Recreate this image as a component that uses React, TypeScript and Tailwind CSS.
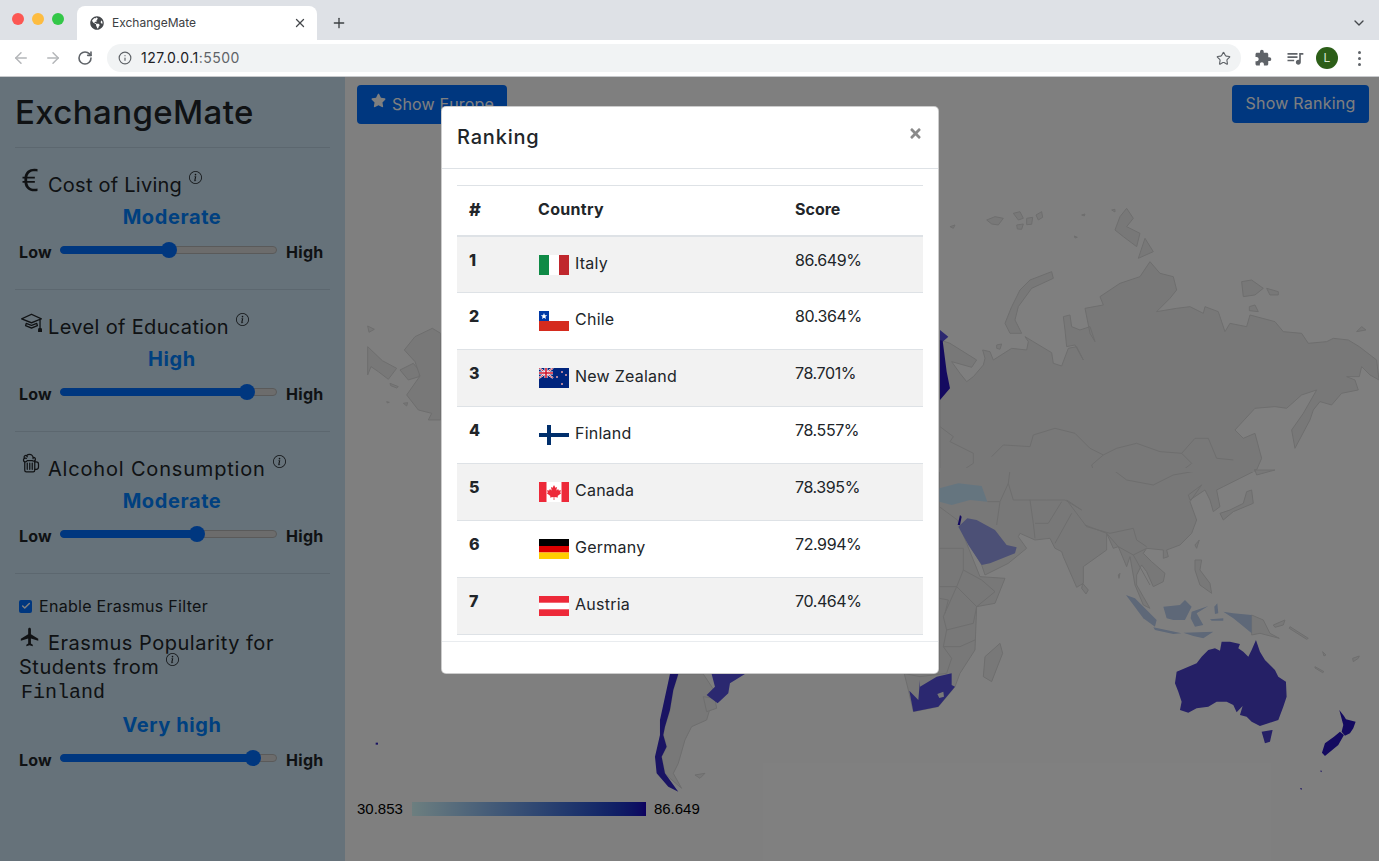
import React from 'react';
import { ArrowLeft, ArrowRight, RotateCw, Info, Star, X, Plus, ChevronDown, Check } from 'lucide-react';
import { FaGlobeAmericas, FaStar, FaTimes } from 'react-icons/fa';
import { MdExtension, MdQueueMusic, MdFlight } from 'react-icons/md';
import { BsCurrencyEuro, BsMortarboard, BsInfoCircle } from 'react-icons/bs';
import { IoBeerOutline } from 'react-icons/io5';

const LAND = '#f0f0f0';
const LINE = '#dcdcdc';

type Shape = { p: string; fill?: string; line?: boolean };

// map pieces, traced per region in local coords
const northAsia: Shape[] = [
  { p: '0,1020 0,630 30,640 110,690 95,712 35,695 60,730 80,755 100,740 130,705 135,685 128,660 150,665 160,690 215,655 260,660 265,635 255,620 335,668 340,700 365,708 385,655 410,650 430,690 405,645 380,650 375,600 370,560 390,555 395,590 420,600 450,590 465,635 450,610 435,535 490,525 480,500 540,460 600,440 630,395 660,430 700,440 710,480 690,505 650,545 710,535 750,530 790,550 795,530 835,545 855,605 870,580 920,590 930,555 1005,575 1030,605 1085,610 1105,640 1160,635 1180,625 1225,630 1258,650 1310,690 1317,750 1290,735 1265,710 1258,740 1220,740 1245,750 1255,780 1205,790 1175,825 1140,815 1120,840 1110,870 1065,955 1055,900 1090,850 1130,780 1085,795 1040,835 1005,830 945,835 885,900 910,925 945,910 965,985 950,1020' },
  { p: '195,580 215,530 240,480 270,450 335,425 340,445 275,475 235,530 225,570 245,610 210,610' },
  { p: '540,260 560,235 580,265 560,290 600,310 590,350 550,320 525,300' },
  { p: '615,325 640,365 595,385' },
  { p: '905,455 935,450 970,475 945,495 910,500' },
  { p: '980,475 1015,485 1015,495 990,495' },
  { p: '928,530 945,525 955,545 928,542' },
  { p: '1250,605 1265,590 1278,600' },
  { p: '140,270 165,260 190,265 175,285 155,282' },
  { p: '220,250 240,245 250,265 235,270' },
  { p: '260,265 278,262 275,283 260,284' },
  { p: '288,255 305,245 308,262 295,270' },
  { p: '230,285 250,282 245,298 232,297' },
  { p: '170,645 185,642 180,658 170,655' },
  { p: '30,290 45,285 40,295' },
  { p: '515,240 525,238 525,246' },
  { p: '425,255 435,252 433,258' },
  { p: '403,318 412,322 405,324' },
  { p: '0,630 0,600 25,620 8,635', fill: '#5a52e0' },
  { p: '0,630 8,632 20,725 30,775 0,810', fill: '#2814c0' },
  { p: '0,890 40,920 30,935 100,970 100,1000 70,1020', line: true },
  { p: '155,980 190,945 270,950 280,915 345,895 405,910 450,955 490,975 530,955 590,940 660,965 725,970 765,925 805,925 830,985 880,990', line: true },
  { p: '490,975 455,1005 460,1020', line: true },
  { p: '725,970 755,1000 730,1020', line: true },
];

const southAsia: Shape[] = [
  { p: '178,0 1130,0 1080,25 1030,50 1010,60 1020,110 1000,125 990,90 975,60 930,90 925,75 965,45 930,95 950,150 935,190 900,225 860,240 865,260 850,265 850,240 800,235 790,250 815,275 855,310 850,335 820,350 800,305 785,285 770,315 770,345 790,380 810,415 790,405 765,345 750,260 740,290 715,230 700,235 680,190 680,240 610,290 610,340 590,352 550,260 545,245 525,235 510,205 465,210 420,190 415,200 440,235 385,280 315,315 305,285 235,165 178,110' },
  { p: '178,110 232,150 300,320 375,325 345,400 290,410 285,540 240,610 225,650 175,710 100,725 85,660 70,600 178,600' },
  { p: '360,520 368,550 335,635 310,620 315,560' },
  { p: '1100,65 1115,60 1120,100 1060,125 1030,150 1020,130 1050,120 1090,100' },
  { p: '1130,15 1185,0 1125,0' },
  { p: '945,270 965,270 960,300 990,340 995,370 960,345 945,300' },
  { p: '945,225 958,210 950,235' },
  { p: '608,340 625,360 618,372 605,355' },
  { p: '1115,435 1150,450 1170,490 1198,505 1140,490 1115,495' },
  { p: '1180,465 1215,450 1210,465 1185,472' },
  { p: '1230,470 1285,505 1280,508 1228,475' },
  { p: '1305,590 1332,605 1328,608 1305,594' },
  { p: '1328,545 1338,555 1332,558' },
  { p: '1418,565 1438,558 1435,565 1420,575' },
  { p: '715,315 720,310 717,325' },
  { p: '178,55 235,40 305,48 322,95 270,90 215,105 178,95', fill: '#caeaff' },
  { p: '235,170 262,145 290,150 345,180 380,225 410,232 405,250 330,280 305,285 265,225', fill: '#98a0ec' },
  { p: '233,165 240,135 245,140 240,165', fill: '#2814c0' },
  { p: '738,375 765,385 830,450 825,470 790,445', fill: '#bcd0f0' },
  { p: '820,472 905,490 880,492 825,480', fill: '#bcd0f0' },
  { p: '910,488 1000,485 970,505 940,498', fill: '#bcd0f0' },
  { p: '850,410 900,405 915,390 935,410 915,450 880,450 860,445', fill: '#bcd0f0' },
  { p: '935,425 985,408 950,430 970,465 945,470 932,445', fill: '#bcd0f0' },
  { p: '1030,425 1060,430 1115,435 1115,490 1085,465 1060,445', fill: '#bcd0f0' },
  { p: '1003,410 1012,400 1015,430 1005,432', fill: '#bcd0f0' },
  { p: '990,448 1030,445 1030,452 995,452', fill: '#bcd0f0' },
  { p: '120,630 120,650 170,620 215,610 215,645 225,650 175,710 100,725 88,662 115,690', fill: '#5650e0' },
  { p: '172,672 190,665 192,680 178,684', fill: LAND },
  { p: '885,640 890,605 950,580 965,560 985,540 1005,535 1020,542 1025,515 1050,515 1080,522 1075,535 1090,545 1105,560 1115,540 1128,510 1140,545 1155,570 1185,600 1195,620 1218,635 1220,680 1210,710 1195,750 1165,760 1140,768 1115,755 1100,740 1080,735 1088,708 1070,727 1060,705 1040,695 1010,695 985,710 950,715 925,728 900,720 905,695 895,665', fill: '#4a40cc' },
  { p: '1145,785 1178,780 1170,815 1155,820', fill: '#4a40cc' },
  { p: '1378,720 1392,738 1398,748 1427,755 1420,775 1410,790 1395,797 1385,785 1390,765', fill: '#2814c0' },
  { p: '1380,785 1392,795 1375,825 1345,850 1335,858 1326,848 1335,820 1362,800', fill: '#2814c0' },
  { p: '1320,902 1326,902 1324,907', fill: '#2814c0' },
  { p: '1260,955 1266,955 1264,960', fill: '#2814c0' },
  { p: '390,0 385,40 400,90 450,90 500,90 555,90 605,120 560,90', line: true },
  { p: '700,0 740,30 820,45 880,15 965,0', line: true },
  { p: '560,90 620,170 690,190 760,175 770,210 800,230', line: true },
  { p: '322,95 360,95 350,165', line: true },
  { p: '450,90 460,160 465,205', line: true },
  { p: '545,95 505,160 465,160', line: true },
  { p: '575,130 525,220', line: true },
  { p: '360,95 385,40', line: true },
  { p: '615,165 680,190 715,230 760,255 800,235', line: true },
  { p: '760,255 810,345', line: true },
  { p: '178,235 250,235 250,300 230,350 290,410 345,365 305,330 250,300', line: true },
  { p: '178,350 230,350 190,440 200,480 280,460 290,410', line: true },
  { p: '200,480 190,530 240,530 285,510', line: true },
  { p: '190,530 215,565 200,610 120,620 70,610', line: true },
  { p: '178,385 205,390 195,430', line: true },
];

const canada: Shape[] = [
  { p: '68,680 112,722 155,745 130,778 100,755 78,740 68,765' },
  { p: '68,618 88,628 72,637' },
  { p: '165,750 205,730 225,755 222,770 190,780' },
  { p: '178,690 210,650 262,625 287,640 287,900 250,900 260,880 220,870 185,825 225,768 210,725' },
  { p: '135,790 160,800 155,804 137,797' },
  { p: '175,850 188,848 185,858' },
  { p: '125,845 133,847 127,849' },
];

const southAmerica: Shape[] = [
  { p: '1000,42 1075,42 1110,95 1085,180 1040,200 1020,240 1000,310 985,340 1010,385 975,355 960,340 950,290 965,260 955,225 960,200 975,150 985,90' },
  { p: '1075,110 1110,115 1115,145 1085,155' },
  { p: '1050,345 1080,340 1065,355' },
  { p: '975,42 1000,42 985,90 975,150 960,200 955,225 965,260 950,290 960,340 1000,395 970,380 935,340 930,290 945,225 945,180', fill: '#3428c6' },
  { p: '1100,42 1200,42 1155,70 1150,100 1118,130 1085,105 1110,80', fill: '#5650e0' },
  { p: '92,248 99,248 99,254 92,254', fill: '#3428c6' },
];

const MapRegion = ({ shapes, x, y }: { shapes: Shape[]; x: number; y: number }) => (
  <g transform={`translate(${x} ${y}) scale(0.3333)`}>
    {shapes.map((s, i) =>
      s.line ? (
        <polyline key={i} points={s.p} fill="none" stroke={LINE} strokeWidth={1} vectorEffect="non-scaling-stroke" />
      ) : (
        <polygon key={i} points={s.p} fill={s.fill || LAND} stroke={s.fill ? 'none' : LINE} strokeWidth={1} vectorEffect="non-scaling-stroke" />
      )
    )}
  </g>
);

const WorldMap = () => (
  <svg viewBox="345 77 1034 784" className="block w-full h-full">
    <MapRegion shapes={northAsia} x={940} y={130} />
    <MapRegion shapes={southAsia} x={880} y={470} />
    <MapRegion shapes={canada} x={345} y={120} />
    <MapRegion shapes={southAmerica} x={345} y={660} />
    {/* hide the seam between the two Asia pieces */}
    <rect x="939" y="468" width="315" height="4" fill={LAND} />
  </svg>
);

// flags, 30x20
const Flag = ({ code }: { code: string }) => {
  const inner: Record<string, React.ReactNode> = {
    it: (<><rect width="10" height="20" fill="#0f8a46" /><rect x="10" width="10" height="20" fill="#fff" /><rect x="20" width="10" height="20" fill="#c0272d" /></>),
    cl: (<><rect width="30" height="10" fill="#fff" /><rect y="10" width="30" height="10" fill="#d52b1e" /><rect width="10" height="10" fill="#0039a6" /><polygon points="5,2 5.9,4.2 8.2,4.3 6.4,5.8 7,8 5,6.8 3,8 3.6,5.8 1.8,4.3 4.1,4.2" fill="#fff" /></>),
    nz: (<><rect width="30" height="20" fill="#00247d" /><rect width="14" height="10" fill="#00247d" /><path d="M0 0L14 10M14 0L0 10" stroke="#fff" strokeWidth="2" /><path d="M0 0L14 10M14 0L0 10" stroke="#cc142b" strokeWidth="0.8" /><path d="M7 0V10M0 5H14" stroke="#fff" strokeWidth="3" /><path d="M7 0V10M0 5H14" stroke="#cc142b" strokeWidth="1.6" /><circle cx="23" cy="4" r="1" fill="#e8a0a8" /><circle cx="27" cy="7" r="1" fill="#e8a0a8" /><circle cx="18" cy="9" r="1" fill="#e8a0a8" /><circle cx="23" cy="16" r="1" fill="#e8a0a8" /></>),
    fi: (<><rect width="30" height="20" fill="#fff" /><rect x="8" width="4" height="20" fill="#002f6c" /><rect y="8" width="30" height="4" fill="#002f6c" /></>),
    ca: (<><rect width="30" height="20" fill="#fff" /><rect width="7.5" height="20" fill="#ed2939" /><rect x="22.5" width="7.5" height="20" fill="#ed2939" /><polygon points="15,3 16.4,5.8 18,5 17.4,8.5 19.2,7 19.8,8.6 22,8.2 21.2,10.6 22.2,11.2 18.6,14 19,15.4 15.4,14.9 15.4,18 14.6,18 14.6,14.9 11,15.4 11.4,14 7.8,11.2 8.8,10.6 8,8.2 10.2,8.6 10.8,7 12.6,8.5 12,5 13.6,5.8" fill="#ed2939" /></>),
    de: (<><rect width="30" height="7" fill="#000" /><rect y="7" width="30" height="6.5" fill="#dd0000" /><rect y="13.5" width="30" height="6.5" fill="#ffce00" /></>),
    at: (<><rect width="30" height="20" fill="#fff" /><rect width="30" height="6.7" fill="#ed2939" /><rect y="13.3" width="30" height="6.7" fill="#ed2939" /></>),
  };
  return <svg viewBox="0 0 30 20" className="w-[30px] h-[20px] shrink-0 mt-1 ml-px">{inner[code]}</svg>;
};

const ranking = [
  { rank: 1, code: 'it', name: 'Italy', score: '86.649%' },
  { rank: 2, code: 'cl', name: 'Chile', score: '80.364%' },
  { rank: 3, code: 'nz', name: 'New Zealand', score: '78.701%' },
  { rank: 4, code: 'fi', name: 'Finland', score: '78.557%' },
  { rank: 5, code: 'ca', name: 'Canada', score: '78.395%' },
  { rank: 6, code: 'de', name: 'Germany', score: '72.994%' },
  { rank: 7, code: 'at', name: 'Austria', score: '70.464%' },
];

const InfoMark = () => <BsInfoCircle size={13} className="inline-block align-top mt-[-2px] ml-[7px]" />;

const Slider = ({ value }: { value: number }) => (
  <div className="flex items-center h-[30px] pl-1">
    <span className="w-[41px] font-bold text-base tracking-[0.01em]">Low</span>
    <div className="relative w-[217px] h-2 -mt-[5px] rounded-full bg-[#d8d8d8] border border-[#b5b5b5]">
      <div className="h-full -m-px box-content rounded-full bg-[#006eff] border border-[#006eff]" style={{ width: `${value}%` }} />
      <div className="absolute top-[-5px] w-4 h-4 -ml-2 rounded-full bg-[#006eff]" style={{ left: `${value}%` }} />
    </div>
    <span className="ml-[9px] font-bold text-base tracking-[0.02em]">High</span>
  </div>
);

const Rating = ({ label }: { label: string }) => (
  <div className="text-center text-xl font-bold leading-[30px] tracking-[0.03em] text-[#0080ff] pr-px">{label}</div>
);

const Filter = ({ icon, title, label, value, spacing }: { icon: React.ReactNode; title: string; label: string; value: number; spacing: string }) => (
  <div className="border-t border-[#b9cfde] pt-[25px] h-[142px]">
    <div className={`pl-1 text-xl leading-[24px] h-[24px] ${spacing}`}>
      {icon}
      {title}
      <InfoMark />
    </div>
    <div className="mt-[5px]"><Rating label={label} /></div>
    <div className="mt-[5px]"><Slider value={value} /></div>
  </div>
);

const BrowserChrome = () => (
  <div className="shrink-0 [font-family:Inter,sans-serif]">
    <div className="h-10 bg-[#dee1e6] flex items-end relative">
      <div className="flex gap-2 pl-3 pb-[15px] w-[77px]">
        <span className="w-3 h-3 rounded-full bg-[#fc5753]" />
        <span className="w-3 h-3 rounded-full bg-[#fdbc40]" />
        <span className="w-3 h-3 rounded-full bg-[#33c748]" />
      </div>
      <div className="w-[240px] h-[34px] bg-white rounded-t-lg flex items-center pl-[13px] pr-[10px] text-[#3c4043] text-xs">
        <FaGlobeAmericas size={14} className="text-[#45484c]" />
        <span className="ml-2 flex-1">ExchangeMate</span>
        <X size={14} strokeWidth={2.2} className="text-[#45484c]" />
      </div>
      <Plus size={16} strokeWidth={2} className="ml-[14px] mb-[9px] text-[#3c4043]" />
      <ChevronDown size={16} strokeWidth={2} className="absolute right-3 top-[15px] text-[#45484c]" />
    </div>
    <div className="h-[37px] bg-white border-b border-[#c8cacd] flex items-center pl-3 pr-[18px]">
      <ArrowLeft size={18} className="text-[#b4b6b9]" />
      <ArrowRight size={18} className="ml-[14px] text-[#b4b6b9]" />
      <RotateCw size={16} strokeWidth={2.4} className="ml-[15px] text-[#5f6368]" />
      <div className="ml-[14px] flex-1 h-7 rounded-full bg-[#f1f3f4] flex items-center pl-[11px] pr-[10px] text-sm">
        <Info size={14} strokeWidth={2} className="text-[#5f6368]" />
        <span className="ml-[9px] text-[#202124] tracking-[0.035em]">127.0.0.1<span className="text-[#5f6368]">:5500</span></span>
        <Star size={15} strokeWidth={1.8} className="ml-auto text-[#5f6368]" />
      </div>
      <MdExtension size={18} className="ml-[13px] text-[#5f6368]" />
      <MdQueueMusic size={20} className="ml-[13px] text-[#5f6368]" />
      <div className="ml-[11px] w-[22px] h-[22px] rounded-full bg-[#2c5e18] text-[#d8e6d0] text-xs flex items-center justify-center">L</div>
      <div className="ml-[20px] flex flex-col gap-[3px]">
        <span className="w-[3px] h-[3px] rounded-full bg-[#5f6368]" />
        <span className="w-[3px] h-[3px] rounded-full bg-[#5f6368]" />
        <span className="w-[3px] h-[3px] rounded-full bg-[#5f6368]" />
      </div>
    </div>
  </div>
);

const Sidebar = () => (
  <div className="w-[345px] shrink-0 bg-[#cce4f4] px-[15px] text-[#212529]">
    <h1 className="text-[33px] font-medium leading-[70px] tracking-[0.012em] whitespace-nowrap">ExchangeMate</h1>
    <Filter icon={<BsCurrencyEuro size={30} className="inline-block align-top mt-[-8px] ml-[-4px] mr-[3px]" />} title="Cost of Living" label="Moderate" value={50.2} spacing="tracking-[0.012em]" />
    <Filter icon={<BsMortarboard size={21} className="inline-block align-top mt-[-4px] ml-[2px] mr-[6px]" />} title="Level of Education" label="High" value={86.6} spacing="tracking-[0.0175em]" />
    <Filter icon={<IoBeerOutline size={20} className="inline-block align-top mt-[-4px] ml-[2px] mr-[7px]" />} title="Alcohol Consumption" label="Moderate" value={63.1} spacing="tracking-[0.041em]" />
    <div className="border-t border-[#b9cfde] pt-[24px]">
      <label className="flex items-center pl-1 h-[16px]">
        <span className="w-[13px] h-[13px] rounded-[2px] bg-[#006eff] flex items-center justify-center">
          <Check size={10} strokeWidth={3.5} className="text-white" />
        </span>
        <span className="ml-[7px] text-base tracking-[0.018em]">Enable Erasmus Filter</span>
      </label>
      <div className="pl-1 mt-[17px] text-xl leading-[24px] tracking-[0.026em]">
        <MdFlight size={22} className="inline-block align-top mt-[-5px] mr-[7px]" />
        Erasmus Popularity for Students from
        <InfoMark />
      </div>
      <div className="pl-[6px] mt-[2px] [font-family:'Liberation_Mono',monospace] text-xl font-medium leading-[24px]">Finland</div>
      <div className="mt-[5px]"><Rating label="Very high" /></div>
      <div className="mt-[5px]"><Slider value={89.4} /></div>
    </div>
  </div>
);

const RankingModal = () => (
  <div className="w-[498px] h-[568px] bg-white rounded-[5px] border border-black/20 flex flex-col text-[#212529]">
    <div className="h-[62px] border-b border-[#dee2e6] flex items-start justify-between px-[15px] shrink-0">
      <h2 className="text-xl font-medium leading-[60px] tracking-[0.04em]">Ranking</h2>
      <FaTimes size={15} className="mt-[19px] text-[#8a8a8a]" />
    </div>
    <div className="flex-1 px-[15px] pt-4">
      <table className="w-full table-fixed border-collapse text-base">
        <thead>
          <tr className="h-[50px] border-t border-b-2 border-[#dee2e6] text-left">
            <th className="w-[69px] px-3 pb-[2px] font-extrabold text-[18px]">#</th>
            <th className="w-[257px] px-3 pb-[2px] font-bold tracking-[0.02em]">Country</th>
            <th className="px-3 pb-[2px] font-bold">Score</th>
          </tr>
        </thead>
        <tbody>
          {ranking.map(r => (
            <tr key={r.rank} className={`h-[57px] border-b border-[#dee2e6] align-top ${r.rank % 2 ? 'bg-[#f2f2f2]' : 'bg-white'}`}>
              <td className="px-3 pt-[11px] font-extrabold leading-6">{r.rank}</td>
              <td className="px-3 pt-[14px]">
                <div className="flex items-start leading-6 tracking-[0.015em]">
                  <Flag code={r.code} />
                  <span className="ml-[6px]">{r.name}</span>
                </div>
              </td>
              <td className="px-3 pt-[11px] leading-6 tracking-[-0.025em]">{r.score}</td>
            </tr>
          ))}
        </tbody>
      </table>
    </div>
    <div className="h-[32px] border-t border-[#e9ecef] shrink-0" />
  </div>
);

export default function App() {
  return (
    <div className="h-screen flex flex-col overflow-hidden [font-family:Inter,sans-serif]">
      <BrowserChrome />
      <div className="relative flex flex-1 min-h-0">
        <Sidebar />
        <div className="relative flex-1 bg-white">
          <WorldMap />
          <button className="absolute top-2 left-3 h-[39px] w-[150px] rounded bg-[#006eff] text-white text-base tracking-[0.01em] flex items-center pl-[14px] pb-[2px]">
            <FaStar size={15} className="mt-[-6px] mr-[6px]" />
            Show Europe
          </button>
          <button className="absolute top-2 right-[10px] h-[38px] w-[137px] rounded bg-[#006eff] text-white text-base tracking-[0.015em] pb-[2px]">Show Ranking</button>
          <div className="absolute left-3 bottom-[42px] flex items-center [font-family:'Liberation_Sans',sans-serif] text-[15px] leading-5 text-black">
            <span>30.853</span>
            <div className="ml-[9px] w-[234px] h-[14px] bg-linear-to-r from-[#dafeff] to-[#1a00c0]" />
            <span className="ml-2">86.649</span>
          </div>
        </div>
        {/* backdrop + dialog */}
        <div className="absolute inset-0 bg-black/50 flex justify-center pt-[29px] pl-px">
          <RankingModal />
        </div>
      </div>
    </div>
  );
}
